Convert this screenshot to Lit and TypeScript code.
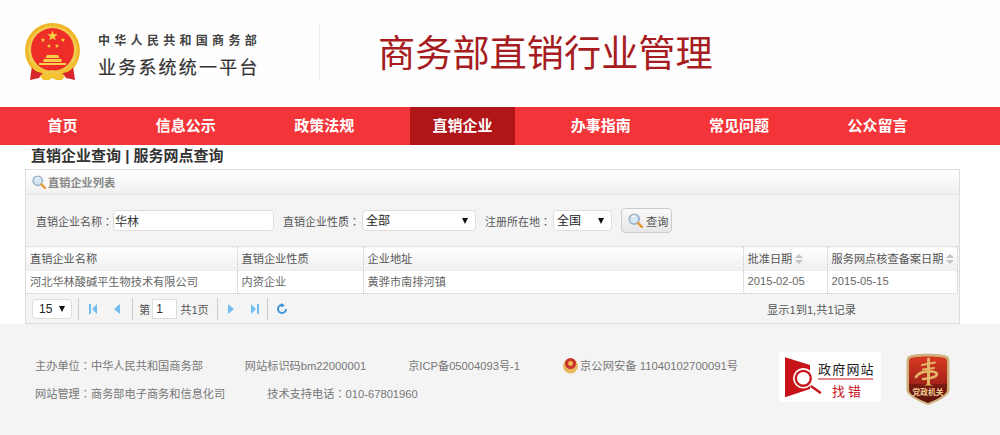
import { LitElement, html, css, svg } from 'lit';
import { customElement, state } from 'lit/decorators.js';

const NAV = ['首页', '信息公示', '政策法规', '直销企业', '办事指南', '常见问题', '公众留言'];

const magnifier = svg`
  <circle cx="5.8" cy="5.8" r="4.6" fill="#d6e7f6" stroke="#9db4ca" stroke-width="1.6"></circle>
  <path d="M4 3.6a3 3 0 0 1 3-.6" fill="none" stroke="#fff" stroke-width="1.2"></path>
  <path d="M9.4 9.4l3.6 3.6" stroke="#e39a35" stroke-width="2.4" stroke-linecap="round"></path>`;

const star = (x: number, y: number, r: number) => {
  const pts: string[] = [];
  for (let i = 0; i < 10; i++) {
    const a = (Math.PI / 5) * i - Math.PI / 2;
    const d = i % 2 ? r * 0.42 : r;
    pts.push(`${(x + d * Math.cos(a)).toFixed(2)},${(y + d * Math.sin(a)).toFixed(2)}`);
  }
  return svg`<polygon points=${pts.join(' ')} fill="#f7d33d"></polygon>`;
};

@customElement('app-root')
export class AppRoot extends LitElement {
  static styles = css`
    :host {
      display: block;
      width: 1000px;
      height: 435px;
      overflow: hidden;
      background: #fff;
      font-family: 'Liberation Sans', 'Noto Sans CJK SC', sans-serif;
      font-size: 11.2px;
      color: #666;
    }
    * { box-sizing: border-box; }
    .c { font-family: 'Noto Sans CJK TC', sans-serif; }

    .top {
      height: 107px;
      display: flex;
      align-items: center;
      padding: 0 0 3px 25px;
      background: #fefefe;
    }
    .emblem { width: 56px; height: 58px; flex-shrink: 0; }
    .org { margin: 8px 0 0 17px; width: 180px; }
    .org-small {
      font-size: 12px;
      font-weight: 700;
      letter-spacing: 4.3px;
      color: #444;
      line-height: 16px;
      white-space: nowrap;
    }
    .org-big {
      margin-top: 7px;
      font-size: 18px;
      letter-spacing: 2.2px;
      color: #333;
      line-height: 24px;
      white-space: nowrap;
      -webkit-text-stroke: 0.2px #333;
    }
    .divider { width: 1px; height: 58px; background: #eee; margin: 0 58px 0 41px; }
    .site-title {
      font-size: 37.2px;
      color: #a61c20;
      line-height: 48px;
      white-space: nowrap;
      margin-top: 4px;
    }

    nav {
      height: 38px;
      display: flex;
      gap: 33.3px;
      padding-left: 25px;
      background: #f33539;
    }
    nav a {
      padding: 0 22.5px;
      color: #fff;
      font-size: 15px;
      font-weight: 700;
      line-height: 38px;
      white-space: nowrap;
    }
    nav a.active { background: #b01518; }

    h1 {
      margin: 0;
      padding-left: 31px;
      height: 24px;
      font-size: 15px;
      font-weight: 700;
      line-height: 21px;
      color: #333;
    }

    .panel {
      margin: 0 40px 0 25px;
      height: 155px;
      border: 1px solid #ddd;
      background: #f4f4f4;
      display: flex;
      flex-direction: column;
    }
    .panel-head {
      height: 25px;
      display: flex;
      align-items: center;
      gap: 2px;
      padding-left: 6px;
      font-weight: 700;
      font-size: 11.2px;
      color: #888;
      background: linear-gradient(#fff, #f0f0f0);
      border-bottom: 1px solid #e4e4e4;
    }
    .panel-head svg { width: 14px; height: 14px; }

    .search {
      height: 51px;
      display: flex;
      align-items: center;
      padding-left: 10px;
      color: #555;
    }
    .search label { white-space: nowrap; font-size: 11px; }
    .text-input {
      width: 161px;
      height: 21px;
      margin: 0 9px 0 0;
      padding: 0 0 0 1px;
      border: 1px solid #ddd;
      border-radius: 4px;
      background: #fff;
      font: inherit;
      font-size: 12px;
      color: #333;
    }
    .select {
      position: relative;
      height: 21px;
      border: 1px solid #ddd;
      border-radius: 4px;
      background: #fff;
      padding-left: 3px;
      font-size: 12px;
      line-height: 21px;
      color: #222;
    }
    .select::after {
      content: '';
      position: absolute;
      right: 7px;
      top: 7px;
      border: 3.5px solid transparent;
      border-top: 6px solid #111;
      border-bottom: 0;
    }
    .kind { width: 114px; margin: 0 9px 0 2px; }
    .region { width: 59px; margin: 0 9px 0 2px; }
    .query {
      width: 51px;
      height: 25px;
      display: flex;
      align-items: center;
      gap: 3px;
      padding-left: 6px;
      border: 1px solid #ccc;
      border-radius: 4px;
      background: linear-gradient(#fafafa, #e6e6e6);
      color: #555;
    }
    .query svg { width: 15px; height: 15px; }

    table {
      width: 931px;
      table-layout: fixed;
      border-collapse: collapse;
    }
    th, td {
      padding: 0 0 0 4px;
      text-align: left;
      font-weight: 400;
      white-space: nowrap;
      overflow: hidden;
      border-right: 1px dotted #ccc;
    }
    th {
      height: 24px;
      padding-bottom: 1px;
      background: linear-gradient(#fff, #eee);
      border-top: 1px solid #e2e2e2;
      color: #555;
    }
    td {
      height: 23px;
      padding-bottom: 2px;
      background: #fff;
      border-bottom: 1px dotted #ccc;
      color: #666;
    }
    .sort {
      display: inline-block;
      width: 8px;
      height: 10px;
      margin-left: 3px;
      vertical-align: -1px;
    }

    .pager {
      flex: 1;
      display: flex;
      align-items: center;
      padding-left: 6px;
      color: #555;
    }
    .size {
      width: 40px;
      height: 20px;
      padding-left: 6px;
      font-size: 12px;
      line-height: 18px;
      margin: 0 6px 0 0;
    }
    .size::after { top: 6px; right: 6px; }
    .sep { width: 1px; height: 22px; background: #ccc; }
    .pg {
      width: 24px;
      height: 20px;
      display: flex;
      align-items: center;
      justify-content: center;
    }
    .pg svg { width: 12px; height: 12px; fill: #74bdf0; }
    .first { margin-left: 2px; }
    .after-prev { margin-left: 3px; }
    .page-label { margin-left: 6px; }
    .after-total { margin: 0 1px 0 8px; }
    .after-last { margin-right: 2px; }
    .page-no {
      width: 25px;
      height: 20px;
      margin: 0 3px 0 2px;
      border: 1px solid #ddd;
      background: #fff;
      padding: 0 0 0 3px;
      font-size: 12px;
      line-height: 16px;
      color: #333;
    }
    .count { margin-left: auto; padding-right: 103px; }

    footer {
      height: 111px;
      background: #f4f4f4;
      display: flex;
      color: #777;
    }
    .info {
      width: 744px;
      margin-left: 35px;
      padding-top: 33px;
      display: flex;
      flex-direction: column;
      gap: 12px;
    }
    .info-row { display: flex; gap: 42px; height: 16px; align-items: center; white-space: nowrap; }
    .police { display: flex; align-items: center; gap: 1px; font-size: 11.3px; }
    .police svg { width: 17px; height: 18px; }
    .report {
      width: 102px;
      height: 50px;
      margin-top: 28px;
      background: #fff;
      border-radius: 2px;
    }
    .report svg { display: block; }
    .shield { width: 44px; height: 52px; margin: 29px 0 0 25px; }
  `;

  @state() private keyword = '华林';

  private renderEmblem() {
    return svg`<svg class="emblem" viewBox="0 0 56 58">
      <circle cx="27.5" cy="27.5" r="27.5" fill="#efb62a"></circle>
      <circle cx="27.5" cy="27.5" r="24.5" fill="#f0cb4e"></circle>
      <circle cx="27.5" cy="26.5" r="21.5" fill="#ee2d28"></circle>
      ${star(27.5, 13, 5.4)}${star(18, 17, 2.4)}${star(38, 17, 2.4)}${star(24, 23, 2.2)}${star(32, 23, 2.2)}
      <path d="M22 32h11l1.5 3h-14zM18.5 36h18v3h-18zM14 40h27v2H14z" fill="#f6cf4a"></path>
      <path d="M7 43l-2 14 9-2 5-7zM48 43l2 14-9-2-5-7z" fill="#d8262c"></path>
      <path d="M8 39c4 7 12 9 19.5 9S43 46 47 39l2 4c-3 5-8 7-12 7-4 0-6-3-9.500-3s-5.500 3-9.500 3c-4 0-9-2-12-7z" fill="#f2c230"></path>
      <path d="M15 53c4-2 8-2 12.500-4 4.500 2 8.500 2 12.500 4l-3 4h-6l-3.500-2-3.500 2h-6z" fill="#f2c230"></path>
    </svg>`;
  }

  private renderReport() {
    return html`<svg width="102" height="50" viewBox="0 0 102 50">
      <path d="M6 5.300L31 13v24L6 45.300z" fill="#c8121a"></path>
      <circle cx="24.300" cy="26.300" r="10.300" fill="#fff"></circle>
      <circle cx="24.300" cy="26.300" r="8.600" fill="#c8121a"></circle>
      <circle cx="24.300" cy="26.300" r="6.300" fill="#fff"></circle>
      <path d="M32.500 34.500l8.500 6" stroke="#c8121a" stroke-width="2.400" stroke-linecap="round"></path>
      <text x="39" y="22" font-size="13" letter-spacing="1.200" fill="#222">政府网站</text>
      <path d="M39 27h55" stroke="#c8121a" stroke-width="1"></path>
      <text x="53" y="43.500" font-size="13" letter-spacing="3" fill="#c8121a">找错</text>
    </svg>`;
  }

  private renderShield() {
    return svg`<svg class="shield" viewBox="0 0 44 52">
      <defs>
        <linearGradient id="sg" x1="0" y1="0" x2="0" y2="1">
          <stop offset="0" stop-color="#d8391f"></stop>
          <stop offset="0.58" stop-color="#a5231a"></stop>
          <stop offset="0.6" stop-color="#7a1a12"></stop>
          <stop offset="1" stop-color="#5e130d"></stop>
        </linearGradient>
      </defs>
      <path d="M3 3C10 0 34 0 41 3c2 1 2.500 3 2.500 6v28c0 6-13 12-21.500 15C14 49 .5 43 .5 37V9C.5 6 1 4 3 3z" fill="#cdb07a"></path>
      <path d="M5 5c7-2 27-2 34 0 1.500.5 2 2 2 4v28c0 5-12 10-19 13C15 47 3 42 3 37V9c0-2 .5-3.500 2-4z" fill="url(#sg)"></path>
      <path d="M22.500 6v24" stroke="#e6b56c" stroke-width="3" stroke-linecap="round"></path>
      <path d="M16 12l13-2.500M17 16.500l11-1.500" stroke="#e6b56c" stroke-width="2" stroke-linecap="round"></path>
      <path d="M10 24c3-5 10-6 16-5.500 6 .5 6 4 2 5.500-4 1.500-8 2-11 2" fill="none" stroke="#e6b56c" stroke-width="2.600" stroke-linecap="round"></path>
      <path d="M16 32.500c3.500 0 5-1 6.500-3.500 1.500 2.500 3 3.500 6.500 3.500z" fill="#e6b56c"></path>
      <text x="22" y="42" text-anchor="middle" font-size="7.700" font-weight="700" fill="#efcf94">党政机关</text>
    </svg>`;
  }

  private sortIcon() {
    return html`<svg class="sort" viewBox="0 0 8 10">
      <path d="M4 0l4 4H0zM4 10L0 6h8z" fill="#c4c4c4"></path>
    </svg>`;
  }

  render() {
    return html`
      <div class="top">
        ${this.renderEmblem()}
        <div class="org">
          <div class="org-small">中华人民共和国商务部</div>
          <div class="org-big">业务系统统一平台</div>
        </div>
        <div class="divider"></div>
        <div class="site-title">商务部直销行业管理</div>
      </div>

      <nav>
        ${NAV.map((n) => html`<a class=${n === '直销企业' ? 'active' : ''}>${n}</a>`)}
      </nav>

      <h1>直销企业查询 | 服务网点查询</h1>

      <div class="panel">
        <div class="panel-head">
          <svg viewBox="0 0 14 14">${magnifier}</svg>
          直销企业列表
        </div>
        <div class="search">
          <label>直销企业名称<span class="c">：</span></label>
          <input class="text-input" .value=${this.keyword} />
          <label>直销企业性质<span class="c">：</span></label>
          <div class="select kind">全部</div>
          <label>注册所在地<span class="c">：</span></label>
          <div class="select region">全国</div>
          <div class="query"><svg viewBox="0 0 14 14">${magnifier}</svg>查询</div>
        </div>
        <table>
          <colgroup>
            <col style="width:211px" /><col style="width:126px" /><col style="width:380px" />
            <col style="width:84px" /><col style="width:130px" />
          </colgroup>
          <thead>
            <tr>
              <th>直销企业名称</th>
              <th>直销企业性质</th>
              <th>企业地址</th>
              <th>批准日期${this.sortIcon()}</th>
              <th>服务网点核查备案日期${this.sortIcon()}</th>
            </tr>
          </thead>
          <tbody>
            <tr>
              <td>河北华林酸碱平生物技术有限公司</td>
              <td>内资企业</td>
              <td>黄骅市南排河镇</td>
              <td>2015-02-05</td>
              <td>2015-05-15</td>
            </tr>
          </tbody>
        </table>
        <div class="pager">
          <div class="select size">15</div>
          <div class="sep"></div>
          <div class="pg first"><svg viewBox="0 0 12 12"><path d="M2 1h2v10H2zM10 1v10L5 6z"></path></svg></div>
          <div class="pg"><svg viewBox="0 0 12 12"><path d="M9 1v10L3 6z"></path></svg></div>
          <div class="sep after-prev"></div>
          <span class="page-label">第</span>
          <input class="page-no" value="1" />
          <span>共1页</span>
          <div class="sep after-total"></div>
          <div class="pg"><svg viewBox="0 0 12 12"><path d="M3 1v10l6-5z"></path></svg></div>
          <div class="pg"><svg viewBox="0 0 12 12"><path d="M2 1v10l5-5zM8 1h2v10H8z"></path></svg></div>
          <div class="sep after-last"></div>
          <div class="pg"><svg viewBox="0 0 12 12"><path d="M6 2a4 4 0 1 0 4 4" fill="none" stroke="#3d95dc" stroke-width="2"></path><path d="M5 0l4 2.200L5 4.500z" fill="#3d95dc"></path></svg></div>
          <div class="count">显示1到1,共1记录</div>
        </div>
      </div>

      <footer>
        <div class="info">
          <div class="info-row">
            <span>主办单位<span class="c">：</span>中华人民共和国商务部</span>
            <span>网站标识码bm22000001</span>
            <span>京ICP备05004093号-1</span>
            <span class="police">
              <svg viewBox="0 0 17 18">
                <circle cx="8.500" cy="10" r="7.500" fill="#e6b95a"></circle>
                <circle cx="8.500" cy="7.500" r="5.500" fill="#c8332c"></circle>
                <circle cx="8.500" cy="7.500" r="2.400" fill="#f0c24a"></circle>
              </svg>
              京公网安备 11040102700091号
            </span>
          </div>
          <div class="info-row">
            <span>网站管理<span class="c">：</span>商务部电子商务和信息化司</span>
            <span>技术支持电话<span class="c">：</span>010-67801960</span>
          </div>
        </div>
        <div class="report">${this.renderReport()}</div>
        ${this.renderShield()}
      </footer>
    `;
  }
}
